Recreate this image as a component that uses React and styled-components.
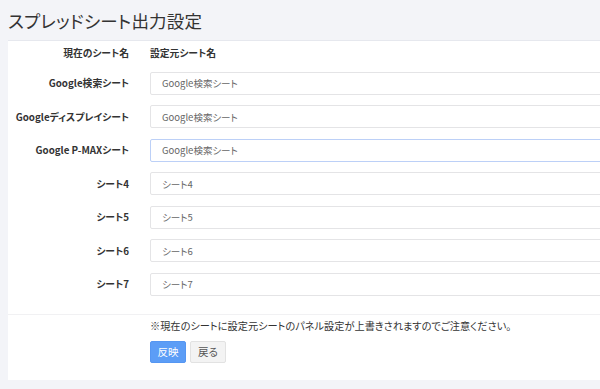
import React from 'react';
import styled, { createGlobalStyle, css } from 'styled-components';

const GlobalStyle = createGlobalStyle`
  html, body {
    margin: 0;
    padding: 0;
    background: #f3f4f8;
    overflow: hidden;
  }
  body {
    font-family: "Noto Sans CJK JP", "Noto Sans", sans-serif;
    font-feature-settings: "palt";
    color: #333;
  }
`;

const Page = styled.div`
  width: 640px;
  padding: 0 0 0 8px;
`;

const Title = styled.h1`
  margin: 0;
  height: 40px;
  display: flex;
  align-items: center;
  font-size: 17.5px;
  font-weight: 400;
  color: #333;
  letter-spacing: 0.2px;
`;

const Card = styled.section`
  background: #fff;
  border-top: 1px solid #e6e8ee;
  height: 339px;
`;

const Form = styled.div`
  display: grid;
  grid-template-columns: 121px 1fr;
  column-gap: 21px;
  row-gap: 10.5px;
  padding: 4px 0 18px;
`;

const Label = styled.div`
  display: flex;
  align-items: center;
  justify-content: flex-end;
  font-size: 9.8px;
  font-weight: 700;
  color: #333;
  white-space: nowrap;
  ${(props) =>
    props.header &&
    css`
      height: 16px;
    `}
`;

const HeadCell = styled.div`
  display: flex;
  align-items: center;
  height: 16px;
  font-size: 9.8px;
  font-weight: 700;
  color: #333;
`;

const Input = styled.div`
  height: 23px;
  box-sizing: border-box;
  border: 1px solid ${(props) => (props.focused ? '#bcd0f7' : '#e4e4e6')};
  border-radius: 2px;
  display: flex;
  align-items: center;
  padding-left: 11px;
  font-size: 9.5px;
  color: #666;
`;

const Footer = styled.div`
  border-top: 1px solid #f1f1f3;
  padding: 3px 0 0 142px;
`;

const Note = styled.p`
  margin: 0 0 7px;
  font-size: 10.2px;
  line-height: 16px;
  color: #333;
`;

const Buttons = styled.div`
  display: flex;
  gap: 4px;
`;

const Button = styled.button`
  width: 36px;
  height: 22px;
  padding: 0;
  border-radius: 2px;
  font-family: inherit;
  font-feature-settings: "palt";
  font-size: 10.5px;
  cursor: pointer;
  ${(props) =>
    props.primary
      ? css`
          background: #5c9df6;
          border: 1px solid #5596f2;
          color: #fff;
        `
      : css`
          background: #f3f3f3;
          border: 1px solid #e2e2e2;
          color: #555;
        `}
`;

const rows = [
  { label: 'Google検索シート', value: 'Google検索シート' },
  { label: 'Googleディスプレイシート', value: 'Google検索シート' },
  { label: 'Google P-MAXシート', value: 'Google検索シート', focused: true },
  { label: 'シート4', value: 'シート4' },
  { label: 'シート5', value: 'シート5' },
  { label: 'シート6', value: 'シート6' },
  { label: 'シート7', value: 'シート7' },
];

const App = () => {
  return (
    <Page>
      <GlobalStyle />
      <Title>スプレッドシート出力設定</Title>
      <Card>
        <Form>
          <Label header>現在のシート名</Label>
          <HeadCell>設定元シート名</HeadCell>
          {rows.map((row) => (
            <React.Fragment key={row.label}>
              <Label>{row.label}</Label>
              <Input focused={row.focused}>{row.value}</Input>
            </React.Fragment>
          ))}
        </Form>
        <Footer>
          <Note>※現在のシートに設定元シートのパネル設定が上書きされますのでご注意ください。</Note>
          <Buttons>
            <Button primary>反映</Button>
            <Button>戻る</Button>
          </Buttons>
        </Footer>
      </Card>
    </Page>
  );
};

export default App;
